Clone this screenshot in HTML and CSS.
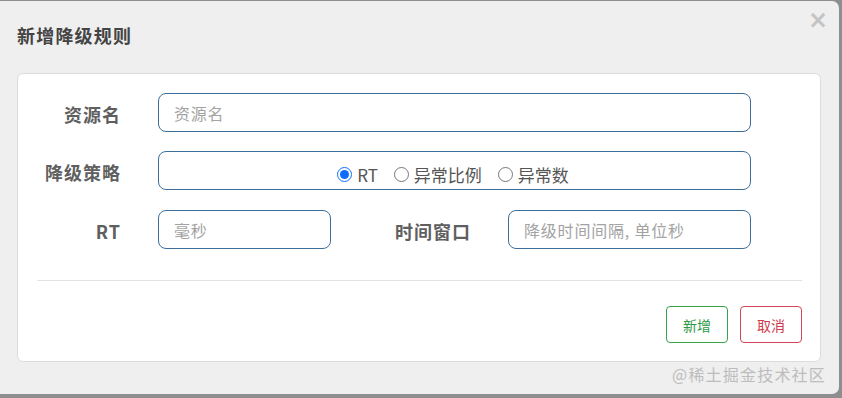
FILE: index.html
```html
<!DOCTYPE html>
<html lang="zh">
<head>
<meta charset="utf-8">
<title>新增降级规则</title>
<link rel="stylesheet" href="styles.css">
</head>
<body>
<div class="dialog">
  <div class="dialog-header">
    <h3 class="dialog-title">新增降级规则</h3>
    <span class="close">&times;</span>
  </div>
  <div class="card">
    <div class="row">
      <label class="label">资源名</label>
      <input class="input input-wide" type="text" placeholder="资源名">
    </div>
    <div class="row">
      <label class="label">降级策略</label>
      <div class="input input-wide radios">
        <label class="radio"><input type="radio" name="s" checked>RT</label>
        <label class="radio"><input type="radio" name="s">异常比例</label>
        <label class="radio"><input type="radio" name="s">异常数</label>
      </div>
    </div>
    <div class="row">
      <label class="label">RT</label>
      <input class="input input-rt" type="text" placeholder="毫秒">
      <label class="label label-inline">时间窗口</label>
      <input class="input input-win" type="text" placeholder="降级时间间隔, 单位秒">
    </div>
    <div class="divider"></div>
    <div class="actions">
      <button class="btn btn-green">新增</button>
      <button class="btn btn-red">取消</button>
    </div>
  </div>
  <div class="watermark">@稀土掘金技术社区</div>
</div>
</body>
</html>
```
FILE: styles.css
```css
html, body {
  margin: 0;
  padding: 0;
}
body {
  background: #8e8e8e;
  width: 842px;
  height: 398px;
  padding-top: 1px;
  box-sizing: border-box;
  font-family: "Noto Sans CJK SC", "Noto Sans", sans-serif;
}
.dialog {
  width: 839px;
  height: 393px;
  background: #efefef;
  border-radius: 0 7px 7px 0;
  position: relative;
  box-sizing: border-box;
  padding: 0 18px 0 17px;
}
.dialog-header {
  height: 72px;
  display: flex;
  align-items: center;
  justify-content: space-between;
  padding-bottom: 4px;
  box-sizing: border-box;
}
.dialog-title {
  margin: 0;
  font-size: 18px;
  font-weight: 700;
  color: #444;
  letter-spacing: 1.2px;
}
.close {
  font-family: "DejaVu Sans", sans-serif;
  font-size: 24px;
  color: #c4c4c4;
  line-height: 1;
  margin-right: -7px;
  margin-top: -30px;
  font-weight: 700;
}
.card {
  background: #fff;
  border: 1px solid #dcdcdc;
  border-radius: 6px;
  height: 289px;
  box-sizing: border-box;
  padding: 19px 18px 17px 0;
}
.row {
  display: flex;
  align-items: center;
  margin-bottom: 19px;
}
.row:nth-child(2) {
  margin-bottom: 20px;
}
.label {
  width: 103px;
  text-align: right;
  font-size: 18px;
  font-weight: 700;
  color: #5f5f5f;
  letter-spacing: 1px;
  margin-right: 37px;
  box-sizing: border-box;
  padding-top: 2px;
}
.label-inline {
  width: auto;
  margin-left: 64px;
  margin-right: 37px;
}
.input {
  height: 39px;
  box-sizing: border-box;
  border: 1px solid #3c6e9b;
  border-radius: 8px;
  font-family: "Noto Sans CJK SC", sans-serif;
  font-size: 16px;
  color: #555;
  padding: 0 15px;
  outline: none;
  background: #fff;
  letter-spacing: 0.8px;
}
.input::placeholder {
  color: #a3a3a3;
}
.input-wide {
  width: 593px;
}
.input-rt {
  width: 173px;
}
.input-win {
  width: 243px;
}
.radios {
  display: flex;
  align-items: center;
  justify-content: center;
  gap: 16px;
  padding-left: 12px;
  padding-top: 7px;
}
.radio {
  display: flex;
  align-items: center;
  font-size: 17px;
  color: #555;
  letter-spacing: 0;
}
.radio input {
  margin: 0 5px 0 0;
  width: 15px;
  height: 15px;
  accent-color: #0d6efd;
}
.divider {
  height: 1px;
  background: #e2e2e2;
  margin: 31px 0 0 19px;
}
.actions {
  display: flex;
  justify-content: flex-end;
  gap: 12px;
  margin-top: 25px;
}
.btn {
  width: 62px;
  height: 37px;
  background: #fff;
  border-radius: 4px;
  font-family: "Noto Sans CJK SC", sans-serif;
  font-size: 14px;
  padding: 0;
}
.btn-green {
  border: 1px solid #37a24c;
  color: #2e9a44;
}
.btn-red {
  border: 1px solid #d24556;
  color: #cf3a4c;
}
.watermark {
  position: absolute;
  right: 13px;
  bottom: 8px;
  font-size: 16px;
  color: #bdbdbd;
  letter-spacing: 1.2px;
}
```
